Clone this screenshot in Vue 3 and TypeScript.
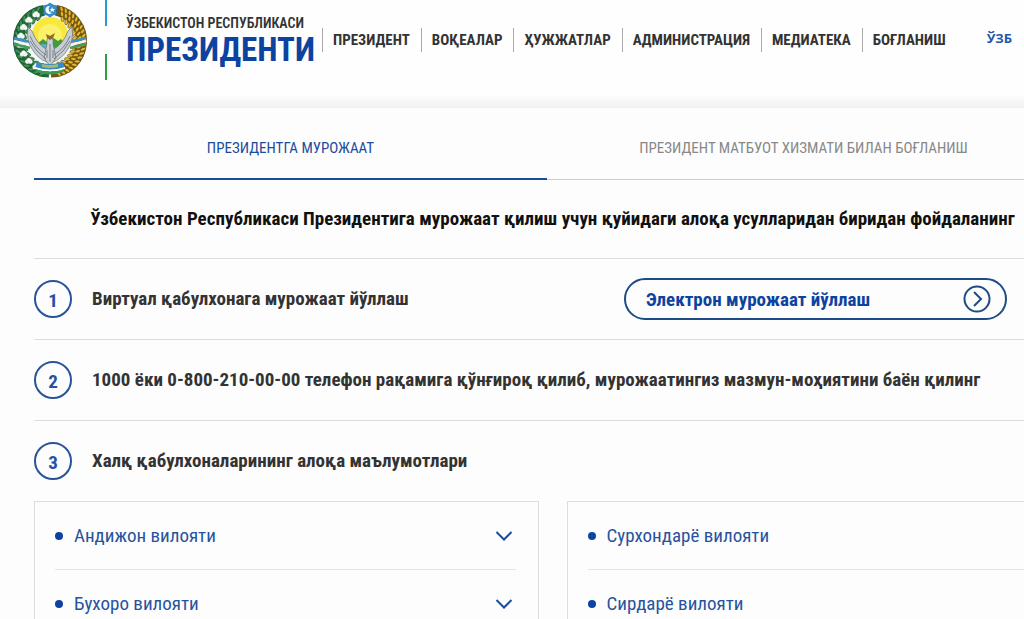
<script setup lang="ts">
interface NavItem {
  label: string
  href: string
}

interface Spot {
  x: number
  y: number
  angle: number
}

const navItems: NavItem[] = [
  { label: 'ПРЕЗИДЕНТ', href: '#president' },
  { label: 'ВОҚЕАЛАР', href: '#events' },
  { label: 'ҲУЖЖАТЛАР', href: '#documents' },
  { label: 'АДМИНИСТРАЦИЯ', href: '#administration' },
  { label: 'МЕДИАТЕКА', href: '#media' },
  { label: 'БОҒЛАНИШ', href: '#contacts' },
]

const regionColumns: string[][] = [
  ['Андижон вилояти', 'Бухоро вилояти'],
  ['Сурхондарё вилояти', 'Сирдарё вилояти'],
]

// Places items on an arc around the emblem's centre; 0 degrees points up.
function arc(radius: number, from: number, to: number, count: number): Spot[] {
  return Array.from({ length: count }, (_, i) => {
    const angle = from + ((to - from) * i) / (count - 1)
    const rad = (angle * Math.PI) / 180
    return { x: 38 + radius * Math.sin(rad), y: 39 - radius * Math.cos(rad), angle }
  })
}

const grains: Spot[] = [...arc(34, 20, 165, 20), ...arc(29.5, 24, 162, 17), ...arc(25, 30, 158, 13)]
const leaves: Spot[] = [...arc(34, -20, -166, 16), ...arc(26, -26, -160, 11)]
const cotton: Spot[] = arc(29.5, -28, -152, 8)
</script>

<template>
  <div class="page">
    <header class="header">
      <a class="brand" href="#home">
        <svg class="emblem" viewBox="0 0 76 78" aria-hidden="true">
          <path d="M32 8.5A31 31 0 0 0 37 70" fill="none" stroke="#24683a" stroke-width="11" />
          <path d="M44 8.5A31 31 0 0 1 39 70" fill="none" stroke="#6b5a16" stroke-width="11" />
          <circle cx="38" cy="38" r="25" fill="#f4f8f4" />
          <ellipse
            v-for="(s, i) in leaves" :key="'l' + i" :cx="s.x" :cy="s.y" rx="1.6" ry="3.4"
            fill="#3f9552" stroke="#144a2a" stroke-width=".6" :transform="`rotate(${s.angle + 55} ${s.x} ${s.y})`"
          />
          <g v-for="(s, i) in cotton" :key="'c' + i" fill="#fff" stroke="#b9cbc0" stroke-width=".4">
            <circle :cx="s.x - 1.5" :cy="s.y" r="2.2" />
            <circle :cx="s.x + 1.5" :cy="s.y" r="2.2" />
            <circle :cx="s.x" :cy="s.y - 1.6" r="2.1" />
          </g>
          <ellipse
            v-for="(s, i) in grains" :key="'g' + i" :cx="s.x" :cy="s.y" rx="1.5" ry="2.9"
            fill="#edb62c" stroke="#5a4a12" stroke-width=".6" :transform="`rotate(${s.angle - 35} ${s.x} ${s.y})`"
          />
          <g fill="none" stroke-width="2.6">
            <path d="M2 36L18 40M58 40L74 36" stroke="#3a93c8" />
            <path d="M2 39L18 43M58 43L74 39" stroke="#f4f4f4" />
            <path d="M2 42L18 46M58 46L74 42" stroke="#4c9b5d" />
          </g>
          <circle cx="38" cy="33" r="18" fill="#f7e83b" />
          <circle cx="38" cy="34" r="12" fill="#fbf16b" />
          <path d="M24 43L31 37L35 40L40 35L46 39L49 37L54 43L50 50H26Z" fill="#3f9c3d" />
          <path d="M25 44Q33 40 38 44T51 43V48H26Z" fill="#55b4c9" />
          <g fill="#c9ced2" stroke="#65717b" stroke-width=".7">
            <path d="M16 25Q14 38 20 47Q26 57 35 60L36 48Q25 43 20 29Z" />
            <path d="M60 25Q62 38 56 47Q50 57 41 60L40 48Q51 43 56 29Z" />
            <path d="M35 42Q34 36 38 34Q42 36 41 42L44 56L38 64L32 56Z" />
          </g>
          <path d="M18 34Q23 46 34 53M18 39Q24 50 34 57M58 34Q53 46 42 53M58 39Q52 50 42 57M38 42V60M35 48V56M41 48V56" fill="none" stroke="#5d6972" stroke-width=".8" />
          <path d="M34 32L38 34L43 31L41 36L38 38L35 36Z" fill="#8b6b22" />
          <path d="M25 60Q38 64 51 60L53 66Q38 71 23 66Z" fill="#318dc5" />
          <path d="M23 65Q38 70 53 65V67Q38 72 23 67Z" fill="#fff" />
          <path d="M23 67Q38 72 53 67L51 70Q38 75 25 70Z" fill="#3b9954" />
          <path d="M30 62Q38 64 46 62V65Q38 67 30 65Z" fill="#d3c64a" opacity=".75" />
          <path d="M38 1L41 3L45 4L44 8L45 12L41 13L38 15L35 13L31 12L32 8L31 4L35 3Z" fill="#3491ce" stroke="#1d5f9b" stroke-width=".6" />
          <path d="M38 4A4 4 0 1 0 40 11A4 4 0 0 1 38 4Z" fill="#fff" />
          <path d="M40 5L41 7L43 7L41.5 8.4L42 10L40 9L38.5 10L39 8L37.5 7H39.5Z" fill="#fff" />
        </svg>
        <span class="flag-line"></span>
        <span class="brand-text">
          <span class="brand-top">ЎЗБЕКИСТОН РЕСПУБЛИКАСИ</span>
          <span class="brand-main">ПРЕЗИДЕНТИ</span>
        </span>
      </a>
      <nav class="nav">
        <a v-for="item in navItems" :key="item.href" :href="item.href">{{ item.label }}</a>
      </nav>
      <button class="lang" type="button">ЎЗБ</button>
    </header>

    <main class="content">
      <div class="tabs" role="tablist">
        <button class="tab active" type="button" role="tab" aria-selected="true">ПРЕЗИДЕНТГА МУРОЖААТ</button>
        <button class="tab" type="button" role="tab" aria-selected="false">ПРЕЗИДЕНТ МАТБУОТ ХИЗМАТИ БИЛАН БОҒЛАНИШ</button>
      </div>

      <h1 class="title">Ўзбекистон Республикаси Президентига мурожаат қилиш учун қуйидаги алоқа усулларидан биридан фойдаланинг</h1>

      <section class="step">
        <span class="number">1</span>
        <h2>Виртуал қабулхонага мурожаат йўллаш</h2>
        <a class="send" href="#appeal">
          <span>Электрон мурожаат йўллаш</span>
          <svg viewBox="0 0 28 28" aria-hidden="true">
            <circle cx="14" cy="14" r="12.5" />
            <path d="M11 7L18 14L11 21" />
          </svg>
        </a>
      </section>
      <section class="step">
        <span class="number">2</span>
        <h2>1000 ёки 0-800-210-00-00 телефон рақамига қўнғироқ қилиб, мурожаатингиз мазмун-моҳиятини баён қилинг</h2>
      </section>
      <section class="step">
        <span class="number">3</span>
        <h2>Халқ қабулхоналарининг алоқа маълумотлари</h2>
      </section>

      <div class="regions">
        <ul v-for="(column, i) in regionColumns" :key="i" class="card">
          <li v-for="region in column" :key="region">
            <button class="region" type="button" aria-expanded="false">
              <span class="dot"></span>
              <span class="region-name">{{ region }}</span>
              <svg viewBox="0 0 18 12" aria-hidden="true"><path d="M1.5 2L9 9.5L16.5 2" /></svg>
            </button>
          </li>
        </ul>
      </div>
    </main>
  </div>
</template>

<style>
body {
  margin: 0;
  background: #fdfdfd;
}
html {
  overflow: hidden;
}
</style>

<style scoped>
.page {
  height: 100vh;
  overflow: hidden;
  font-family: "Roboto Condensed", "Liberation Sans Narrow", Roboto, sans-serif;
  color: #333;
}
.page * {
  box-sizing: border-box;
}
a {
  color: inherit;
  text-decoration: none;
}
button {
  padding: 0;
  border: 0;
  background: none;
  font-family: inherit;
  cursor: pointer;
}
.header {
  display: flex;
  align-items: flex-start;
  height: 108px;
  padding: 0 12px;
  background: linear-gradient(#fefefe 94px, #f1f1f1);
  white-space: nowrap;
}
.brand {
  display: flex;
  width: 310px;
  flex: none;
}
.emblem {
  flex: none;
  width: 76px;
  height: 78px;
  margin-top: 2px;
}
.flag-line {
  flex: none;
  width: 2px;
  height: 80px;
  margin-left: 17px;
  background: linear-gradient(#259bd0 26px, #fff 26px 54px, #2c9e43 54px);
}
.brand-text {
  display: flex;
  flex-direction: column;
  padding: 14px 0 0 19px;
}
.brand-top {
  font-size: 14px;
  line-height: 18px;
  font-weight: 600;
}
.brand-main {
  font-size: 33px;
  line-height: 36px;
  font-weight: 700;
  color: #0d43a0;
}
.nav {
  display: flex;
  padding-top: 28px;
}
.nav a {
  padding: 0 11px 0 10px;
  border-left: 1px solid #aaa;
  font-size: 15px;
  line-height: 24px;
  font-weight: 700;
}
.lang {
  margin-left: auto;
  padding-top: 28px;
  font-family: "Open Sans", sans-serif;
  font-size: 13px;
  line-height: 20px;
  font-weight: 700;
  color: #2356a8;
}
.content {
  margin: 0 -47px 0 34px;
  white-space: nowrap;
}
.tabs {
  display: flex;
  padding-right: 11px;
}
.tab {
  flex: 1 1 0;
  min-width: 0;
  height: 72px;
  padding-top: 9px;
  border-bottom: 1px solid #ccc;
  font-size: 15px;
  color: #888;
}
.tab.active {
  border-bottom: 2px solid #1a4d98;
  color: #1c4c9c;
}
.title {
  margin: 0;
  padding: 26px 0;
  font-size: 19px;
  line-height: 26px;
  font-weight: 700;
  text-align: center;
  color: #111;
}
.step {
  display: flex;
  align-items: center;
  gap: 20px;
  height: 81px;
  border-top: 1px solid #ddd;
}
.number {
  width: 38px;
  height: 38px;
  border: 2px solid #27549a;
  border-radius: 50%;
  font-size: 19px;
  line-height: 38px;
  font-weight: 700;
  text-align: center;
  color: #2450a5;
}
.step h2 {
  margin: 0;
  font-size: 19px;
  line-height: 26px;
  font-weight: 700;
}
.send {
  display: flex;
  align-items: center;
  justify-content: space-between;
  width: 383px;
  height: 42px;
  margin: 0 64px 0 auto;
  padding: 0 14px 0 20px;
  border: 2px solid #1d4b87;
  border-radius: 21px;
  font-size: 19px;
  font-weight: 700;
  color: #0d43a0;
}
.send svg {
  width: 28px;
  height: 28px;
  fill: none;
  stroke: #1d4b87;
  stroke-width: 2;
}
.regions {
  display: grid;
  grid-template-columns: 1fr 1fr;
  gap: 28px;
}
.card {
  margin: 0;
  padding: 0 22px 0 20px;
  border: 1px solid #ddd;
  list-style: none;
}
.card li + li {
  border-top: 1px solid #e4e4e4;
}
.region {
  display: flex;
  align-items: center;
  width: 100%;
  height: 67px;
  font-size: 19px;
  color: #27539e;
}
.dot {
  width: 8px;
  height: 8px;
  margin-right: 11px;
  border-radius: 50%;
  background: #0d43a0;
}
.region svg {
  width: 18px;
  height: 12px;
  margin: 0 3px 0 auto;
  fill: none;
  stroke: #1c4c9c;
  stroke-width: 2;
}
</style>
